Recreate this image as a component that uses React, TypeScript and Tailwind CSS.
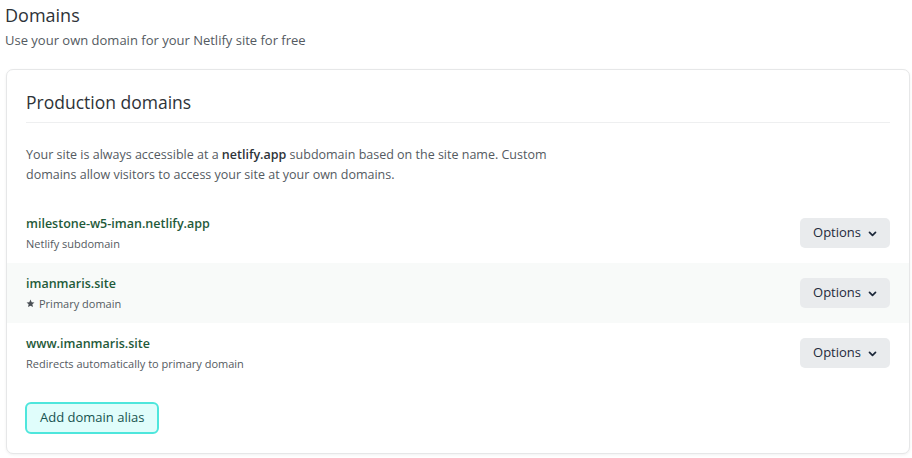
import React from 'react';

const domains = [
  { name: 'milestone-w5-iman.netlify.app', note: 'Netlify subdomain', star: false, shaded: false },
  { name: 'imanmaris.site', note: 'Primary domain', star: true, shaded: true },
  { name: 'www.imanmaris.site', note: 'Redirects automatically to primary domain', star: false, shaded: false },
];

const Chevron = () => (
  <svg width="9" height="6" viewBox="0 0 10 7" className="ml-[7px] mt-px">
    <path d="M1.5 1.5 L5 5 L8.5 1.5" fill="none" stroke="#1e2a3b" strokeWidth="2" strokeLinecap="round" strokeLinejoin="round" />
  </svg>
);

const Star = () => (
  <svg width="9" height="9" viewBox="0 0 24 24" className="mr-[4px]">
    <path d="M12 1.5l3.2 7 7.3.7-5.5 5 1.6 7.3L12 17.7 5.4 21.5 7 14.2l-5.5-5 7.3-.7z" fill="#4a4f55" />
  </svg>
);

export default function App() {
  return (
    <div className="w-[912px] h-[458px] bg-white px-[5px] pt-[3px] font-['Open_Sans',sans-serif] overflow-hidden">
      <h1 className="text-[18px] leading-[25px] text-[#2e3338] font-normal">Domains</h1>
      <p className="mt-[3px] text-[13px] leading-[18px] text-[#545a61]">Use your own domain for your Netlify site for free</p>

      <div className="mt-[20px] ml-px w-[904px] bg-white border border-[#e6e7e8] rounded-[7px] shadow-[0_1px_3px_rgba(0,0,0,0.06)] pb-[19px]">
        <div className="px-[19px] pt-[20px]">
          <h2 className="text-[17.5px] leading-[24px] text-[#2e3338] font-normal">Production domains</h2>
          <div className="mt-[8px] border-t border-[#eeeff0]" />
          <p className="mt-[22px] w-[540px] text-[12.5px] leading-[20px] text-[#545a61]">
            Your site is always accessible at a <span className="font-semibold text-[#2e3338]">netlify.app</span> subdomain based on the site name. Custom domains allow visitors to access your site at your own domains.
          </p>
        </div>

        <div className="mt-[18px]">
          {domains.map((d) => (
            <div
              key={d.name}
              className={`flex items-center justify-between h-[60px] px-[19px] ${d.shaded ? 'bg-[#f8faf9]' : ''}`}
            >
              <div>
                <div className="text-[12.5px] leading-[18px] text-[#1f5a3a] font-semibold">{d.name}</div>
                <div className="mt-[3px] flex items-center text-[11px] leading-[16px] text-[#545a61]">
                  {d.star && <Star />}
                  {d.note}
                </div>
              </div>
              <button className="flex items-center h-[30px] px-[13px] rounded-[5px] bg-[#e9ebed] text-[13px] text-[#1e2a3b] font-medium">
                Options
                <Chevron />
              </button>
            </div>
          ))}
        </div>

        <div className="px-[18px] mt-[19px]">
          <button className="h-[32px] px-[13px] rounded-[6px] bg-[#e0fdfb] border-2 border-[#4ee6dc] text-[13px] text-[#16524f] font-medium">
            Add domain alias
          </button>
        </div>
      </div>
    </div>
  );
}
